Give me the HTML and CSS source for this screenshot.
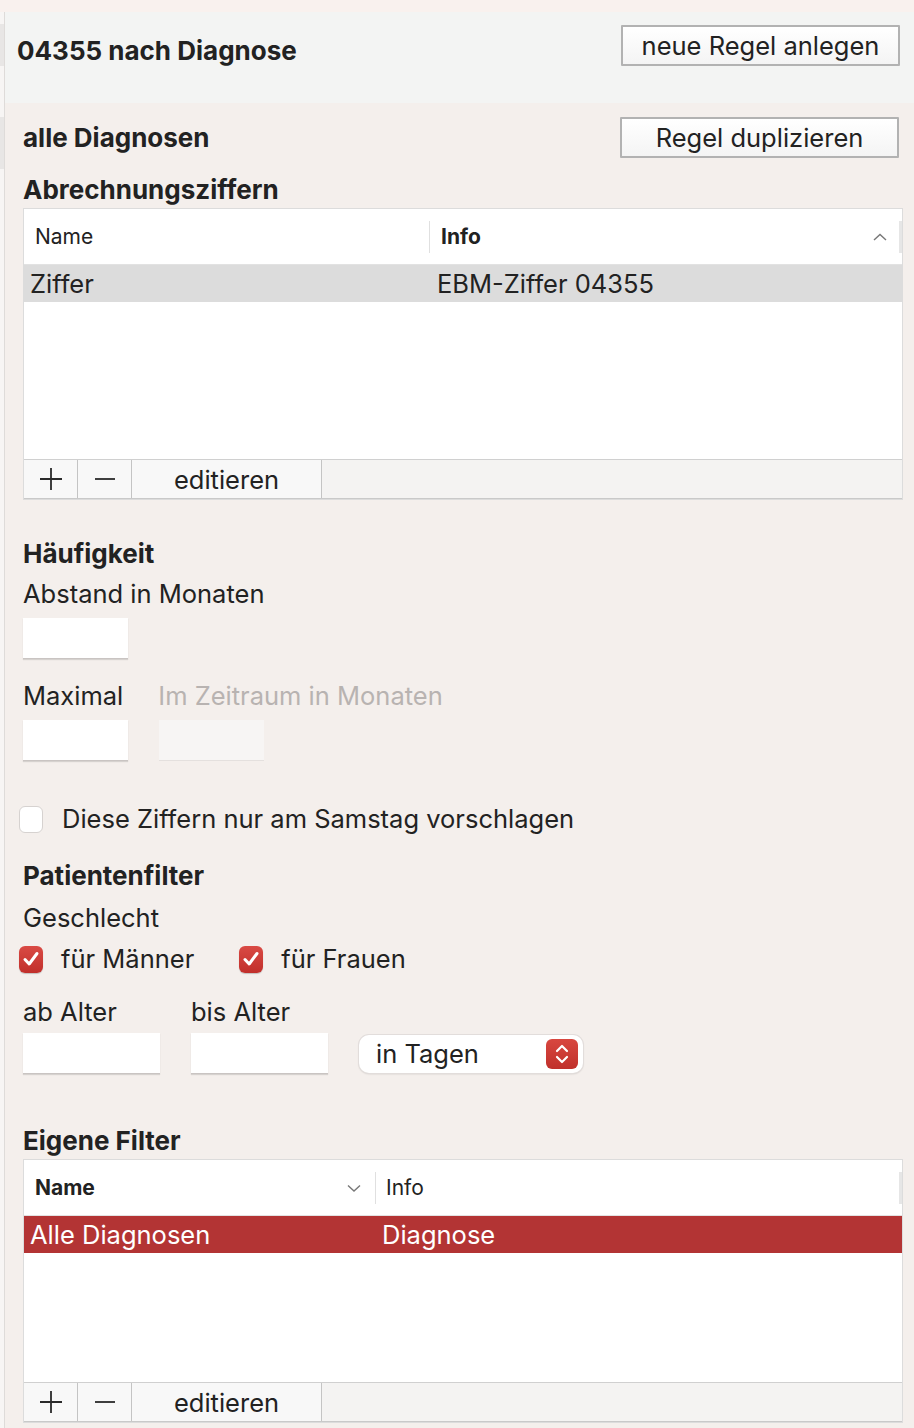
FILE: index.html
```html
<!DOCTYPE html>
<html lang="de">
<head>
  <meta charset="UTF-8">
  <title>04355 nach Diagnose</title>
  <link rel="stylesheet" href="styles.css">
</head>
<body>

<div class="window">
  <div class="top-strip"></div>

  <div class="frame">
    <!-- linker Rand der Seitenleiste -->
    <aside class="edge">
      <span class="edge-mark mark-1"></span>
      <span class="edge-mark mark-2"></span>
    </aside>

    <main class="panel">
      <!-- Kopfbereich -->
      <header class="rule-head">
        <h1>04355 nach Diagnose</h1>
        <button class="push-btn">neue Regel anlegen</button>
      </header>

      <section class="rule-body">
        <div class="title-row">
          <h2>alle Diagnosen</h2>
          <button class="push-btn">Regel duplizieren</button>
        </div>

        <!-- Abrechnungsziffern -->
        <h3 class="section-title tight">Abrechnungsziffern</h3>
        <div class="table-box">
          <div class="list">
            <div class="list-head">
              <div class="col col-a">Name</div>
              <div class="col col-b bold">Info
                <svg class="sort-icon" width="16" height="10" viewBox="0 0 16 10"><path d="M2 8 L8 2.5 L14 8" fill="none" stroke="#777" stroke-width="1.4"/></svg>
              </div>
              <span class="head-end"></span>
            </div>
            <div class="list-row selected-gray">
              <div class="cell cell-a">Ziffer</div>
              <div class="cell cell-b">EBM-Ziffer 04355</div>
            </div>
          </div>
          <div class="toolbar">
            <button class="tool-btn sq"><svg width="22" height="22" viewBox="0 0 22 22"><path d="M11 0 V22 M0 11 H22" stroke="#2a2a2a" stroke-width="1.8"/></svg></button>
            <button class="tool-btn sq"><svg width="22" height="22" viewBox="0 0 22 22"><path d="M1 11 H21" stroke="#2a2a2a" stroke-width="1.8"/></svg></button>
            <button class="tool-btn wide">editieren</button>
          </div>
        </div>

        <!-- Häufigkeit -->
        <h3 class="section-title haeufigkeit">Häufigkeit</h3>
        <div class="label">Abstand in Monaten</div>
        <div class="field-row">
          <input class="num-field" type="text">
        </div>

        <div class="label-row max-row">
          <span class="label">Maximal</span>
          <span class="label disabled">Im Zeitraum in Monaten</span>
        </div>
        <div class="field-row">
          <input class="num-field" type="text">
          <input class="num-field off" type="text" disabled>
        </div>

        <label class="check-line saturday">
          <span class="box"></span>
          <span>Diese Ziffern nur am Samstag vorschlagen</span>
        </label>

        <!-- Patientenfilter -->
        <h3 class="section-title patient">Patientenfilter</h3>
        <div class="label geschlecht">Geschlecht</div>
        <div class="check-row">
          <label class="check-line">
            <span class="box checked">
              <svg width="18" height="18" viewBox="0 0 18 18"><path d="M3 9.5 L7.2 14 L15 3.5" fill="none" stroke="#fff" stroke-width="3" stroke-linecap="round" stroke-linejoin="round"/></svg>
            </span>
            <span>für Männer</span>
          </label>
          <label class="check-line">
            <span class="box checked">
              <svg width="18" height="18" viewBox="0 0 18 18"><path d="M3 9.5 L7.2 14 L15 3.5" fill="none" stroke="#fff" stroke-width="3" stroke-linecap="round" stroke-linejoin="round"/></svg>
            </span>
            <span>für Frauen</span>
          </label>
        </div>

        <div class="age-grid">
          <span class="label">ab Alter</span>
          <span class="label">bis Alter</span>
          <span></span>
          <input class="num-field age" type="text">
          <input class="num-field age" type="text">
          <div class="popup">
            <span>in Tagen</span>
            <span class="stepper">
              <svg width="16" height="24" viewBox="0 0 16 24"><path d="M3 9 L8 4 L13 9 M3 15 L8 20 L13 15" fill="none" stroke="#fff" stroke-width="2.2" stroke-linecap="round" stroke-linejoin="round"/></svg>
            </span>
          </div>
        </div>

        <!-- Eigene Filter -->
        <h3 class="section-title tight eigene">Eigene Filter</h3>
        <div class="table-box">
          <div class="list list-small">
            <div class="list-head">
              <div class="col col-a2 bold">Name
                <svg class="sort-icon" width="16" height="10" viewBox="0 0 16 10"><path d="M2 2.5 L8 8 L14 2.5" fill="none" stroke="#777" stroke-width="1.4"/></svg>
              </div>
              <div class="col col-b2">Info</div>
              <span class="head-end"></span>
            </div>
            <div class="list-row selected-red">
              <div class="cell cell-a2">Alle Diagnosen</div>
              <div class="cell cell-b2">Diagnose</div>
            </div>
          </div>
          <div class="toolbar">
            <button class="tool-btn sq"><svg width="22" height="22" viewBox="0 0 22 22"><path d="M11 0 V22 M0 11 H22" stroke="#2a2a2a" stroke-width="1.8"/></svg></button>
            <button class="tool-btn sq"><svg width="22" height="22" viewBox="0 0 22 22"><path d="M1 11 H21" stroke="#2a2a2a" stroke-width="1.8"/></svg></button>
            <button class="tool-btn wide">editieren</button>
          </div>
        </div>
      </section>
    </main>
  </div>
</div>

</body>
</html>
```

FILE: styles.css
```css
/* Basis */
body {
  margin: 0;
  padding: 0;
  font-family: Inter, "Liberation Sans", sans-serif;
  color: #222;
  background-color: #f4efec;
}
.window {
  width: 914px;
  height: 1428px;
  overflow: hidden;
  display: flex;
  flex-direction: column;
}
.top-strip {
  height: 12px;
  background-color: #f9f1ee;
}
.frame {
  flex: 1;
  display: flex;
}

/* Rand links */
.edge {
  width: 4px;
  border-right: 1px solid #dedbd9;
  background-color: #f7f5f4;
  position: relative;
}
.edge-mark {
  position: absolute;
  left: 0;
  width: 4px;
  background-color: #e8e6e5;
}
.mark-1 { top: 12px; height: 42px; }
.mark-2 { top: 105px; height: 52px; }

.panel {
  flex: 1;
  display: flex;
  flex-direction: column;
}

/* Kopf */
.rule-head {
  height: 91px;
  box-sizing: border-box;
  background-color: #f3f4f3;
  display: flex;
  justify-content: space-between;
  align-items: flex-start;
  padding: 13px 14px 0 12px;
}
.rule-head h1 {
  margin: 9px 0 0;
  font-size: 26px;
  font-weight: 700;
  line-height: 34px;
}
.push-btn {
  width: 279px;
  height: 41px;
  font-family: inherit;
  font-size: 25.5px;
  color: #222;
  background: linear-gradient(#ffffff, #f4f4f4);
  border: 2px solid #b2b2b2;
  border-radius: 1px;
  padding: 0;
}

.rule-body {
  padding: 14px 11px 0 18px;
}
.title-row {
  display: flex;
  justify-content: space-between;
  align-items: center;
  padding-right: 4px;
}
.title-row h2 {
  margin: 0;
  font-size: 26px;
  font-weight: 700;
}

.section-title {
  margin: 0;
  font-size: 26px;
  font-weight: 700;
  line-height: 30px;
}
.tight { margin-top: 17px; margin-bottom: 3px; }
.haeufigkeit { margin-top: 39px; }
.patient { margin-top: 27px; }
.eigene { margin-top: 52px; }

/* Tabellen */
.table-box {
  border: 1px solid #dcdcdc;
  background-color: #fff;
}
.list {
  height: 250px;
}
.list-small {
  height: 222px;
}
.list-head {
  height: 55px;
  display: flex;
  align-items: center;
  border-bottom: 1px solid #e2e2e2;
  position: relative;
  font-size: 21px;
}
.col {
  height: 32px;
  display: flex;
  align-items: center;
  box-sizing: border-box;
}
.col-a { width: 406px; padding-left: 11px; border-right: 1px solid #e0e0e0; }
.col-b { flex: 1; padding-left: 11px; justify-content: space-between; padding-right: 14px; }
.col-a2 { width: 352px; padding-left: 11px; padding-right: 13px; justify-content: space-between; border-right: 1px solid #e0e0e0; }
.col-b2 { flex: 1; padding-left: 10px; }
.bold { font-weight: 700; }
.head-end {
  position: absolute;
  right: 0;
  top: 12px;
  width: 3px;
  height: 32px;
  background-color: #e6e6e6;
}
.list-row {
  height: 37px;
  display: flex;
  align-items: center;
  font-size: 25.5px;
}
.selected-gray { background-color: #dcdcdc; }
.selected-red { background-color: #b33434; color: #fff; }
.cell-a { width: 406px; padding-left: 6px; }
.cell-b { padding-left: 1px; }
.cell-a2 { width: 352px; padding-left: 6px; }
.cell-b2 { padding-left: 0; }

.toolbar {
  height: 38px;
  display: flex;
  background-color: #f4f3f2;
  border-top: 1px solid #d0d0d0;
  border-bottom: 1px solid #c9c9c9;
}
.tool-btn {
  height: 38px;
  font-family: inherit;
  font-size: 25.5px;
  color: #222;
  background-color: #f8f8f8;
  border: none;
  border-right: 1px solid #c4c4c4;
  padding: 0;
  display: flex;
  align-items: center;
  justify-content: center;
}
.tool-btn.sq { width: 54px; }
.tool-btn.wide { width: 190px; }

/* Formular */
.label {
  font-size: 25.5px;
  line-height: 30px;
}
.label.disabled { color: #b8b3b1; }
.haeufigkeit + .label { margin-top: 10px; }
.label-row {
  display: flex;
  gap: 35px;
}
.max-row { margin-top: 22px; }
.field-row {
  display: flex;
  gap: 31px;
  margin-top: 9px;
}
.num-field {
  width: 105px;
  height: 41px;
  box-sizing: border-box;
  border: none;
  border-bottom: 1px solid #c9c4c2;
  background-color: #fff;
  box-shadow: 0 1px 1px rgba(0, 0, 0, 0.12);
  padding: 0;
}
.num-field.off {
  background-color: #f7f5f4;
  border-bottom-color: #e4e0de;
  box-shadow: none;
}
.num-field.age { width: 137px; }

.check-line {
  display: flex;
  align-items: center;
  gap: 19px;
  font-size: 25.5px;
  line-height: 30px;
}
.saturday { margin-top: 43px; margin-left: -4px; }
.box {
  width: 24px;
  height: 27px;
  box-sizing: border-box;
  border: 1px solid #d6d2d0;
  border-radius: 6px;
  background-color: #fff;
  display: flex;
  align-items: center;
  justify-content: center;
}
.box.checked {
  border: none;
  background: linear-gradient(#d94a44, #c12f2b);
  box-shadow: 0 1px 1px rgba(0, 0, 0, 0.2);
}
.geschlecht { margin-top: 12px; }
.check-row {
  display: flex;
  gap: 45px;
  margin-top: 11px;
  margin-left: -4px;
}
.check-row .check-line { gap: 18px; }

.age-grid {
  display: grid;
  grid-template-columns: 137px 137px 224px;
  column-gap: 31px;
  row-gap: 6px;
  margin-top: 23px;
  align-items: center;
}
.popup {
  height: 38px;
  box-sizing: border-box;
  background-color: #fff;
  border-radius: 10px;
  box-shadow: 0 0 0 1px #e2dddb, 0 1px 2px rgba(0, 0, 0, 0.18);
  display: flex;
  align-items: center;
  justify-content: space-between;
  padding: 0 5px 0 17px;
  font-size: 25.5px;
}
.stepper {
  width: 32px;
  height: 30px;
  border-radius: 6px;
  background: linear-gradient(#d8473f, #c0302b);
  display: flex;
  align-items: center;
  justify-content: center;
}
```
